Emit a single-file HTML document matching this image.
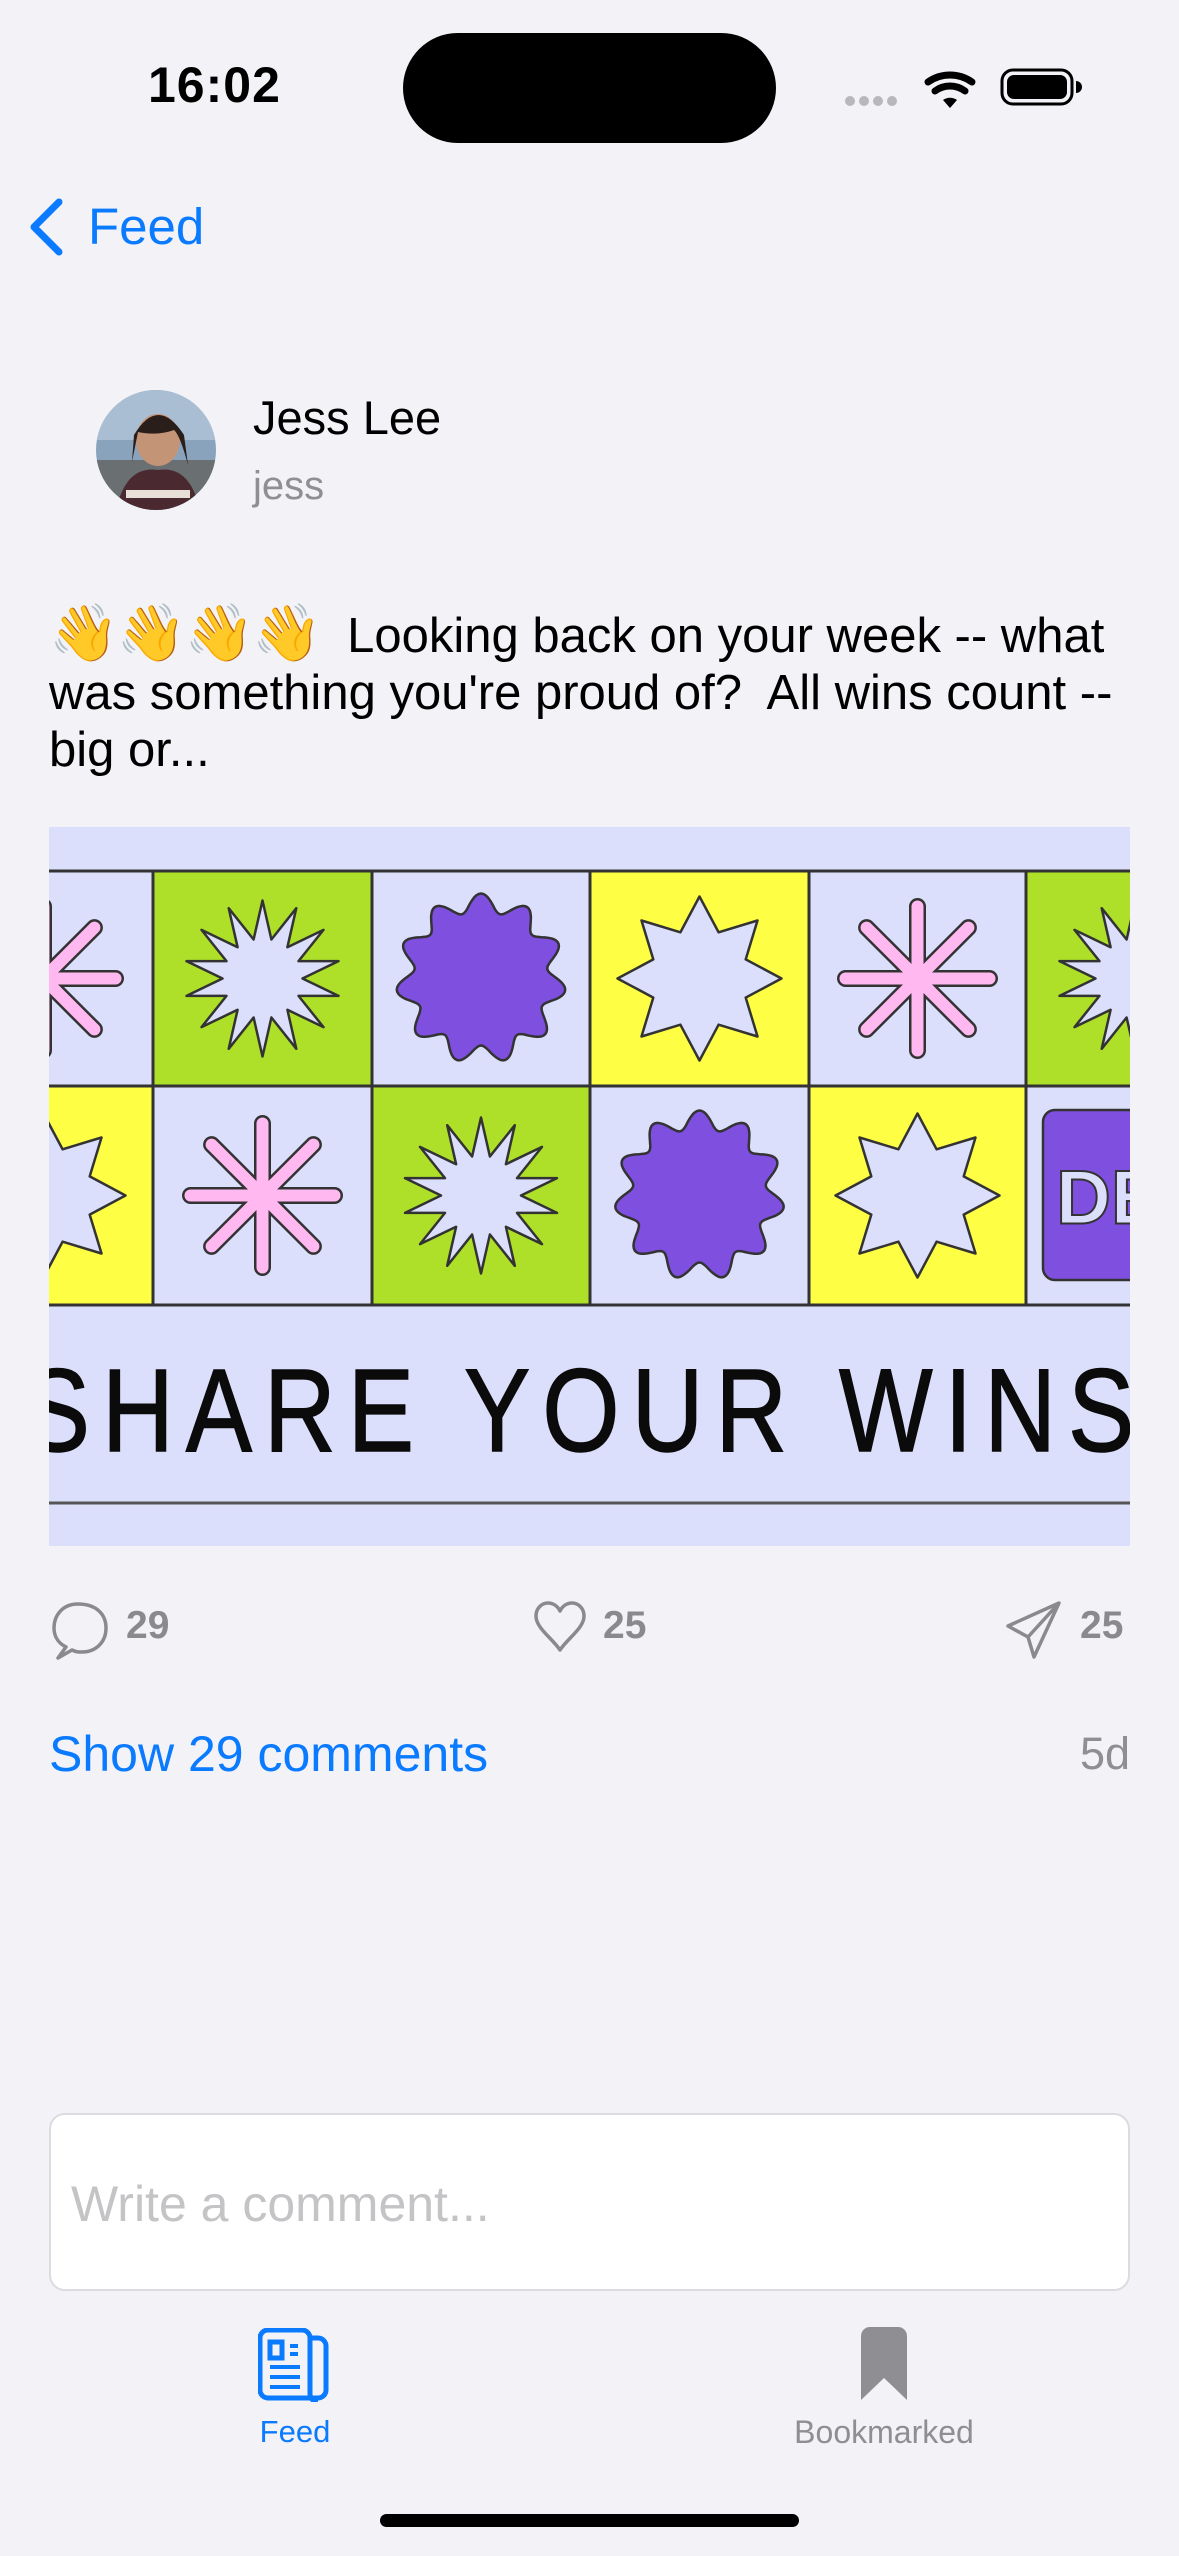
<!DOCTYPE html>
<html><head><meta charset="utf-8">
<style>
*{margin:0;padding:0;box-sizing:border-box}
body{width:1179px;height:2556px;background:#f2f2f7;position:relative;overflow:hidden;font-family:"Liberation Sans",sans-serif;color:#000}
.a{position:absolute;white-space:nowrap}
.em{font-size:56px;letter-spacing:-2px}
</style></head><body>
<div class="a" style="left:148px;top:56px;font-size:50px;font-weight:bold;letter-spacing:1px">16:02</div>
<div class="a" style="left:403px;top:33px;width:373px;height:110px;border-radius:55px;background:#000"></div>
<svg class="a" style="left:840px;top:60px" width="250" height="60" viewBox="0 0 250 60">
<g fill="#b8b8bc"><circle cx="10" cy="41" r="5"/><circle cx="24" cy="41" r="5"/><circle cx="38" cy="41" r="5"/><circle cx="52" cy="41" r="5"/></g>
<path d="M88 22 a38 38 0 0 1 44 0" stroke="#000" stroke-width="7" fill="none" stroke-linecap="round"/>
<path d="M95 31 a25 25 0 0 1 30 0" stroke="#000" stroke-width="7" fill="none" stroke-linecap="round"/>
<path d="M103 40 l7 8 l7 -8 a12 12 0 0 0 -14 0z" fill="#000"/>
<rect x="162" y="10" width="70" height="34" rx="11" fill="none" stroke="#000" stroke-width="3"/>
<rect x="167" y="15" width="60" height="24" rx="7" fill="#000"/>
<path d="M236 21 v12 a5 5 0 0 0 0 -12z" fill="#000"/>
</svg>
<svg class="a" style="left:26px;top:198px" width="40" height="60" viewBox="0 0 40 60"><path d="M33 4 L8 29 L33 54" stroke="#0a7aff" stroke-width="7" fill="none" stroke-linecap="round" stroke-linejoin="round"/></svg>
<div class="a" style="left:88px;top:197px;font-size:51px;color:#0a7aff">Feed</div>
<svg class="a" style="left:96px;top:390px" width="120" height="120" viewBox="0 0 120 120">
<defs><clipPath id="c"><circle cx="60" cy="60" r="60"/></clipPath></defs>
<g clip-path="url(#c)"><rect width="120" height="120" fill="#8aa3bd"/><rect y="0" width="120" height="50" fill="#a9bdd3"/><rect y="70" width="120" height="50" fill="#6a6f72"/>
<ellipse cx="62" cy="50" rx="22" ry="26" fill="#c49476"/><path d="M38 45 q24 -40 50 0 l4 30 q-8 -30 -14 -35 q-16 6 -36 2 l-6 30z" fill="#2a1e1a"/>
<path d="M20 120 q10 -45 42 -40 q32 -5 42 40z" fill="#4a2a30"/><path d="M30 100 h64 v8 h-64z" fill="#e8e0d8"/></g></svg>
<div class="a" style="left:253px;top:390px;font-size:47px">Jess Lee</div>
<div class="a" style="left:253px;top:464px;font-size:40px;color:#8e8e93">jess</div>
<div class="a" style="left:49px;top:604px;font-size:49px;line-height:57px;white-space:normal;width:1090px"><span class="em">👋👋👋👋</span>&nbsp; Looking back on your week -- what was something you're proud of?&nbsp; All wins count -- big or...</div>
<svg id="img" class="a" style="left:49px;top:827px" width="1081" height="719" viewBox="0 0 1081 719">
<rect width="1081" height="719" fill="#dcdffb"/>
<g id="tiles"></g>
<line x1="0" y1="44" x2="1081" y2="44" stroke="#333" stroke-width="3"/>
<line x1="0" y1="259" x2="1081" y2="259" stroke="#333" stroke-width="3"/>
<line x1="0" y1="478" x2="1081" y2="478" stroke="#333" stroke-width="3"/>
<line x1="0" y1="676" x2="1081" y2="676" stroke="#555" stroke-width="3"/>
<g transform="scale(0.84,1)"><text x="-30" y="624" font-family="Liberation Sans,sans-serif" font-size="118" textLength="1322" lengthAdjust="spacing" fill="#0b0b0b" stroke="#0b0b0b" stroke-width="1.5">SHARE YOUR WINS</text></g>
</svg>
<script>
(function(){
var g=document.getElementById('tiles'),ns='http://www.w3.org/2000/svg';
function el(t,a){var e=document.createElementNS(ns,t);for(var k in a)e.setAttribute(k,a[k]);g.appendChild(e);return e;}
var cols=[[-115,104],[104,323],[323,541],[541,760],[760,977],[977,1196]];
var L='#dcdffb',G='#aee02a',Y='#fefe45',P='#7f4fe0',K='#ffb8f0';
var r1=[[L,'ast'],[G,'burst'],[L,'wavy'],[Y,'star'],[L,'ast'],[G,'burst']];
var r2=[[Y,'star'],[L,'ast'],[G,'burst'],[L,'wavy'],[Y,'star'],[L,'de']];
function star(cx,cy,n,ro,ri){var p=[];for(var i=0;i<2*n;i++){var r=i%2?ri:ro,a=Math.PI*i/n-Math.PI/2;p.push((cx+r*Math.cos(a)).toFixed(1)+','+(cy+r*Math.sin(a)).toFixed(1));}return p.join(' ');}
function draw(row,y0,y1){row.forEach(function(t,i){var x0=cols[i][0],x1=cols[i][1],cx=(x0+x1)/2,cy=(y0+y1)/2;
el('rect',{x:x0,y:y0,width:x1-x0,height:y1-y0,fill:t[0],stroke:'#333','stroke-width':3});
if(t[1]=='burst')el('polygon',{points:star(cx,cy,14,78,40),fill:L,stroke:'#333','stroke-width':2.5,'stroke-linejoin':'round'});
if(t[1]=='star')el('polygon',{points:star(cx,cy,8,82,50),fill:L,stroke:'#333','stroke-width':2.5,'stroke-linejoin':'round'});
if(t[1]=='wavy'){var d='';for(var k=0;k<=240;k++){var a=k/240*2*Math.PI,r=76+9*Math.cos(11*a);d+=(k?'L':'M')+(cx+r*Math.sin(a)).toFixed(1)+' '+(cy-r*Math.cos(a)).toFixed(1);}el('path',{d:d+'Z',fill:P,stroke:'#333','stroke-width':2.5});}
if(t[1]=='ast'){[0,45,90,135].forEach(function(an){var a=an*Math.PI/180,dx=72*Math.sin(a),dy=72*Math.cos(a);el('line',{x1:cx-dx,y1:cy-dy,x2:cx+dx,y2:cy+dy,stroke:'#333','stroke-width':17,'stroke-linecap':'round'});});
[0,45,90,135].forEach(function(an){var a=an*Math.PI/180,dx=72*Math.sin(a),dy=72*Math.cos(a);el('line',{x1:cx-dx,y1:cy-dy,x2:cx+dx,y2:cy+dy,stroke:K,'stroke-width':12,'stroke-linecap':'round'});});}
if(t[1]=='de'){el('rect',{x:x0+17,y:y0+24,width:200,height:170,rx:12,fill:P,stroke:'#333','stroke-width':2.5});var tx=el('text',{x:x0+30,y:cy+28,'font-size':76,'font-weight':'bold','font-family':'Liberation Sans,sans-serif',fill:L,stroke:'#333','stroke-width':2});tx.textContent='DEV';}
});}
draw(r1,44,259);draw(r2,259,478);
})();
</script>
<svg class="a" style="left:50px;top:1600px" width="62" height="62" viewBox="0 0 62 62"><path d="M28 4 C12 4 4 16 4 28 C4 38 10 44 16 47 L8 58 L22 50 C26 52 28 52 32 52 C46 52 56 42 56 28 C56 14 46 4 28 4Z" fill="none" stroke="#8a8a8e" stroke-width="3.5" stroke-linejoin="round"/></svg>
<div class="a" style="left:126px;top:1604px;font-size:39px;font-weight:bold;color:#8a8a8e">29</div>
<svg class="a" style="left:532px;top:1600px" width="56" height="56" viewBox="0 0 56 56"><path d="M28 50 C20 38 4 28 4 16 C4 8 10 3 16 3 C22 3 26 7 28 11 C30 7 34 3 40 3 C46 3 52 8 52 16 C52 28 36 38 28 50Z" fill="none" stroke="#8a8a8e" stroke-width="3.5" stroke-linejoin="round"/></svg>
<div class="a" style="left:603px;top:1604px;font-size:39px;font-weight:bold;color:#8a8a8e">25</div>
<svg class="a" style="left:1004px;top:1600px" width="60" height="60" viewBox="0 0 60 60"><path d="M55 3 L4 26 L24 37 L30 57 Z M55 3 L24 37" fill="none" stroke="#8a8a8e" stroke-width="3.5" stroke-linejoin="round"/></svg>
<div class="a" style="left:1080px;top:1604px;font-size:39px;font-weight:bold;color:#8a8a8e">25</div>
<div class="a" style="left:49px;top:1725px;font-size:50px;color:#0a7aff">Show 29 comments</div>
<div class="a" style="right:49px;top:1728px;font-size:45px;color:#8e8e93">5d</div>
<div class="a" style="left:49px;top:2113px;width:1081px;height:178px;border-radius:16px;background:#fff;border:2px solid #dcdce0"></div>
<div class="a" style="left:71px;top:2175px;font-size:50px;color:#c4c4c7">Write a comment...</div>
<svg class="a" style="left:258px;top:2328px" width="72" height="74" viewBox="0 0 72 74"><g fill="none" stroke="#0a7aff" stroke-width="5"><path d="M52 10 h8 a8 8 0 0 1 8 8 v44 a8 8 0 0 1 -8 8 h-50 a8 8 0 0 1 -8 -8 v-52 a8 8 0 0 1 8 -8 h34 a8 8 0 0 1 8 8 v56 a8 8 0 0 0 8 8"/><rect x="12" y="14" width="12" height="16"/></g><g stroke="#0a7aff" stroke-width="4"><path d="M32 18 h8 M32 26 h8 M12 39 h30 M12 49 h30 M12 59 h30"/></g></svg>
<div class="a" style="left:258px;top:2414px;width:74px;text-align:center;font-size:31px;color:#0a7aff">Feed</div>
<svg class="a" style="left:860px;top:2326px" width="48" height="76" viewBox="0 0 48 76"><path d="M1 10 a9 9 0 0 1 9 -9 h28 a9 9 0 0 1 9 9 v64 l-23 -22 l-23 22z" fill="#8e8e93"/></svg>
<div class="a" style="left:774px;top:2414px;width:220px;text-align:center;font-size:32px;color:#8e8e93">Bookmarked</div>
<div class="a" style="left:380px;top:2514px;width:419px;height:13px;border-radius:7px;background:#000"></div>
</body></html>
